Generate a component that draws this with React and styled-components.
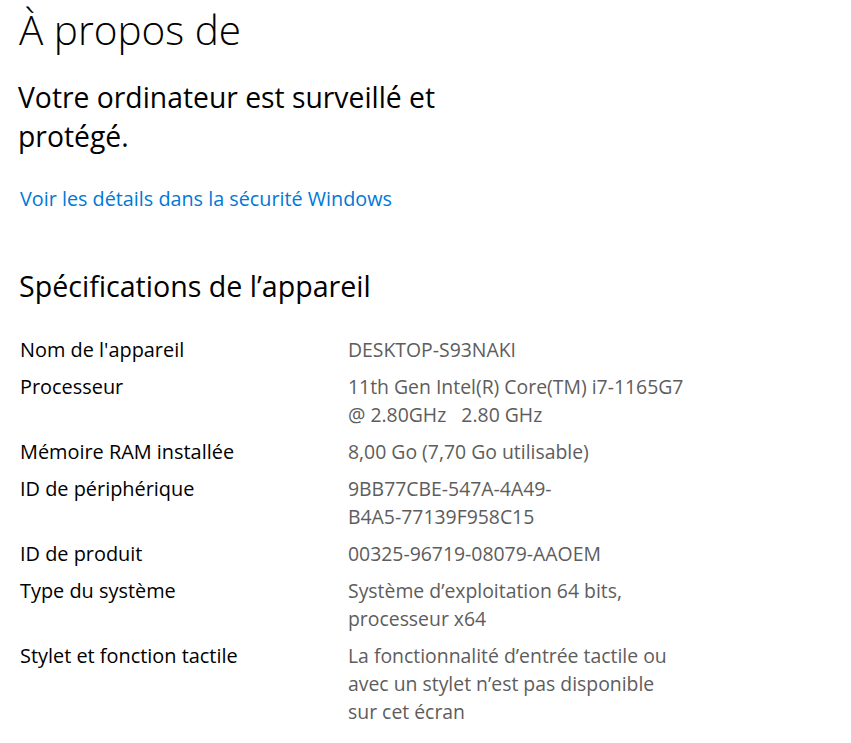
import styled, { createGlobalStyle } from 'styled-components';

const GlobalStyle = createGlobalStyle`
  body {
    margin: 0;
    background: #ffffff;
    font-family: "Open Sans", "Noto Sans", sans-serif;
  }
`;

const Page = styled.div`
  padding: 3px 0 0 20px;
  width: 831px;
  height: 743px;
  box-sizing: border-box;
  overflow: hidden;
`;

const Title = styled.h1`
  margin: 0 0 0 -1px;
  font-size: 40.5px;
  font-weight: 300;
  line-height: 54px;
  color: #000;
`;

const Status = styled.p`
  margin: 21px 0 0 -2px;
  width: 450px;
  font-size: 28.3px;
  font-weight: 400;
  line-height: 39px;
  color: #000;
`;

const Link = styled.a`
  display: inline-block;
  margin-top: 29px;
  font-size: 19.8px;
  line-height: 28px;
  color: #0078d7;
  text-decoration: none;
  cursor: pointer;
`;

const SectionTitle = styled.h2`
  margin: 53px 0 0 -1px;
  font-size: 28.6px;
  font-weight: 400;
  line-height: 40px;
  color: #000;
`;

const Specs = styled.dl`
  margin: 30px 0 0;
  display: grid;
  grid-template-columns: 328px 1fr;
  row-gap: 9px;
`;

const Label = styled.dt`
  font-size: 19.9px;
  line-height: 28px;
  color: #000;
`;

const Value = styled.dd`
  margin: 0;
  font-size: 19.4px;
  line-height: 28px;
  color: #5d5d5d;
`;

const specs = [
  ['Nom de l\u0027appareil', ['DESKTOP-S93NAKI']],
  ['Processeur', ['11th Gen Intel(R) Core(TM) i7-1165G7', '@ 2.80GHz\u00a0\u00a0\u00a02.80 GHz']],
  ['Mémoire RAM installée', ['8,00 Go (7,70 Go utilisable)']],
  ['ID de périphérique', ['9BB77CBE-547A-4A49-', 'B4A5-77139F958C15']],
  ['ID de produit', ['00325-96719-08079-AAOEM']],
  ['Type du système', ['Système d\u2019exploitation 64 bits,', 'processeur x64']],
  ['Stylet et fonction tactile', ['La fonctionnalité d\u2019entrée tactile ou', 'avec un stylet n\u2019est pas disponible', 'sur cet écran']],
];

export default function App() {
  return (
    <Page>
      <GlobalStyle />
      <Title>À propos de</Title>
      <Status>Votre ordinateur est surveillé et protégé.</Status>
      <Link>Voir les détails dans la sécurité Windows</Link>
      <SectionTitle>Spécifications de l’appareil</SectionTitle>
      <Specs>
        {specs.map(([label, lines]) => (
          <>
            <Label key={label}>{label}</Label>
            <Value key={label + '-v'}>
              {lines.map((line, i) => (
                <div key={i}>{line}</div>
              ))}
            </Value>
          </>
        ))}
      </Specs>
    </Page>
  );
}
